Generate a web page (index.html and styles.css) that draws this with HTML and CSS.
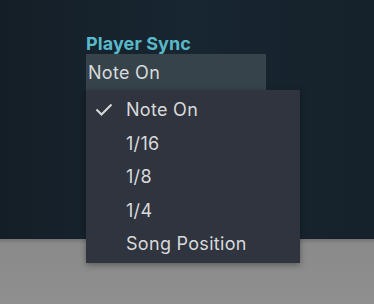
FILE: index.html
```html
<!DOCTYPE html>
<html lang="en">
<head>
    <meta charset="UTF-8">
    <meta name="viewport" content="width=device-width, initial-scale=1.0">
    <title>Player Sync</title>
    <link rel="stylesheet" href="styles.css">
</head>
<body>
    <div class="panel">
        <div class="field">
            <div class="field-label">Player Sync</div>
            <div class="select">Note On</div>

            <ul class="menu">
                <li class="item checked">
                    <svg class="check" width="18" height="13" viewBox="0 0 18 13">
                        <path d="M1.5 6.5 L6.5 11.5 L16.5 1.5" fill="none" stroke="#d9dadc" stroke-width="2"/>
                    </svg>
                    Note On
                </li>
                <li class="item">1/16</li>
                <li class="item">1/8</li>
                <li class="item">1/4</li>
                <li class="item">Song Position</li>
            </ul>
        </div>
    </div>
    <div class="floor"></div>
</body>
</html>
```

FILE: styles.css
```css
body {
    margin: 0;
    font-family: Inter, "Liberation Sans", sans-serif;
    background-color: #8c8c8c;
}
.panel {
    height: 239px;
    background: linear-gradient(90deg, #141e27, #182631 50%, #15212b);
    padding: 33px 0 0 86px;
    box-sizing: border-box;
}
.floor {
    height: 65px;
    background: linear-gradient(#747474, #8a8a8a 5px, #8f8f8f);
}
.field {
    position: relative;
    width: 180px;
}
.field-label {
    color: #5ab9c8;
    font-weight: 700;
    font-size: 18px;
    line-height: 21px;
    letter-spacing: 0.1px;
}
.select {
    height: 36px;
    line-height: 38px;
    background-color: #36434b;
    color: #d9dadc;
    font-size: 18px;
    letter-spacing: 0.3px;
    padding-left: 2px;
}
.menu {
    position: absolute;
    left: 0;
    top: 57px;
    width: 214px;
    margin: 0;
    padding: 3px 0 2px;
    list-style: none;
    background-color: #2f343e;
    box-shadow: 0 2px 6px rgba(0, 0, 0, 0.35);
}
.item {
    position: relative;
    height: 33.5px;
    line-height: 33.5px;
    padding-left: 40px;
    color: #d9dadc;
    font-size: 18px;
    letter-spacing: 0.3px;
}
.check {
    position: absolute;
    left: 9px;
    top: 10px;
}
```
